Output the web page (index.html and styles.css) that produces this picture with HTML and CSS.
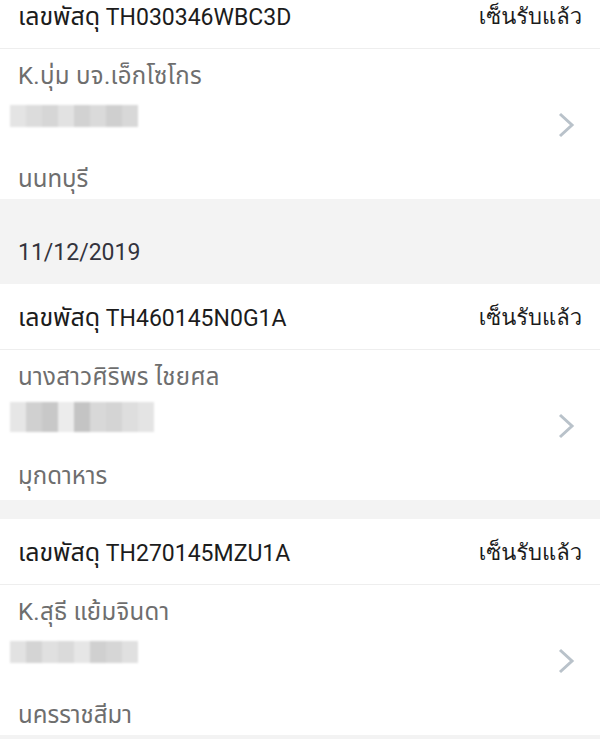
FILE: index.html
```html
<!DOCTYPE html>
<html lang="th">
<head>
    <meta charset="UTF-8">
    <meta name="viewport" content="width=device-width, initial-scale=1.0">
    <title>รายการพัสดุ</title>
    <link rel="stylesheet" href="styles.css">
</head>
<body>
    <div class="list">

      <div class="parcel">
        <div class="parcel-head">
          <span class="track"><span class="label">เลขพัสดุ</span> TH030346WBC3D</span>
          <span class="status">เซ็นรับแล้ว</span>
        </div>
        <div class="parcel-body">
          <div class="info">
            <div class="name">K.บุ่ม บจ.เอ็กโซโกร</div>
            <div class="blur">
              <i style="background:#e4e4e4"></i><i style="background:#dcdcdc"></i><i style="background:#d6d6d6"></i><i style="background:#e2e2e2"></i><i style="background:#d2d2d2"></i><i style="background:#dadada"></i><i style="background:#cfcfcf"></i><i style="background:#d8d8d8"></i>
            </div>
            <div class="place">นนทบุรี</div>
          </div>
          <svg class="chev" viewBox="0 0 17 26" width="17" height="26"><polyline points="2,2 14,13 2,24"/></svg>
        </div>
      </div>

      <div class="date">11/12/2019</div>

      <div class="parcel">
        <div class="parcel-head">
          <span class="track"><span class="label">เลขพัสดุ</span> TH460145N0G1A</span>
          <span class="status">เซ็นรับแล้ว</span>
        </div>
        <div class="parcel-body">
          <div class="info">
            <div class="name">นางสาวศิริพร ไชยศล</div>
            <div class="blur tall">
              <i style="background:#e6e6e6"></i><i style="background:#d0d0d0"></i><i style="background:#c8c8c8"></i><i style="background:#ececec"></i><i style="background:#c4c4c4"></i><i style="background:#d8d8d8"></i><i style="background:#d4d4d4"></i><i style="background:#dedede"></i><i style="background:#e4e4e4"></i>
            </div>
            <div class="place">มุกดาหาร</div>
          </div>
          <svg class="chev" viewBox="0 0 17 26" width="17" height="26"><polyline points="2,2 14,13 2,24"/></svg>
        </div>
      </div>

      <div class="gap"></div>

      <div class="parcel">
        <div class="parcel-head">
          <span class="track"><span class="label">เลขพัสดุ</span> TH270145MZU1A</span>
          <span class="status">เซ็นรับแล้ว</span>
        </div>
        <div class="parcel-body">
          <div class="info">
            <div class="name">K.สุธี แย้มจินดา</div>
            <div class="blur">
              <i style="background:#e2e2e2"></i><i style="background:#d4d4d4"></i><i style="background:#e0e0e0"></i><i style="background:#dadada"></i><i style="background:#e6e6e6"></i><i style="background:#d0d0d0"></i><i style="background:#d6d6d6"></i><i style="background:#e0e0e0"></i>
            </div>
            <div class="place">นครราชสีมา</div>
          </div>
          <svg class="chev" viewBox="0 0 17 26" width="17" height="26"><polyline points="2,2 14,13 2,24"/></svg>
        </div>
      </div>

    </div>
</body>
</html>
```

FILE: styles.css
```css
*{
  padding: 0;
  margin: 0;
  box-sizing: border-box;
}

body{
  background-color: #f3f3f3;
  font-family: Roboto, "Noto Sans Thai", "Noto Sans", sans-serif;
  overflow: hidden;
}

/*list is scrolled a little, first card is cut off at the top*/
.list{
  margin-top: -17px;
  display: flex;
  flex-direction: column;
}

/*one parcel card*/
.parcel{
  background-color: white;
}

.parcel-head{
  height: 66px;
  padding: 2px 18px 0 18px;
  display: flex;
  justify-content: space-between;
  align-items: center;
  border-bottom: 1px solid #eeeeee;
}

.track{
  font-size: 23px;
  color: #1c1c1c;
}

.track .label{
  font-size: 25px;
}

.status{
  font-family: Tahoma, Loma, "Noto Sans Thai", sans-serif;
  font-size: 22px;
  color: #1c1c1c;
}

.parcel-body{
  height: 150px;
  padding: 10px 25px 0 18px;
  display: flex;
  justify-content: space-between;
  align-items: center;
}

.info{
  align-self: flex-start;
  display: flex;
  flex-direction: column;
}

.name, .place{
  height: 34px;
  line-height: 34px;
  font-size: 24px;
  color: #6e6e6e;
}

.name{
  letter-spacing: 0.3px;
}

/*blurred address*/
.blur{
  margin: 12px 0 0 -8px;
  height: 22px;
  display: flex;
  filter: blur(1.2px);
}

.blur i{
  width: 16px;
  height: 100%;
}

.blur.tall{
  height: 30px;
  margin-top: 8px;
}

.place{
  margin-top: 35px;
}

.blur.tall + .place{
  margin-top: 27px;
}

.chev{
  margin-top: -8px;
}

.chev polyline{
  fill: none;
  stroke: #b9c2ca;
  stroke-width: 3;
}

/*date header between cards*/
.date{
  margin-top: 20px;
  height: 65px;
  padding: 2px 0 0 18px;
  display: flex;
  align-items: center;
  font-size: 23px;
  color: #33333d;
}

.gap{
  height: 19px;
}
```
